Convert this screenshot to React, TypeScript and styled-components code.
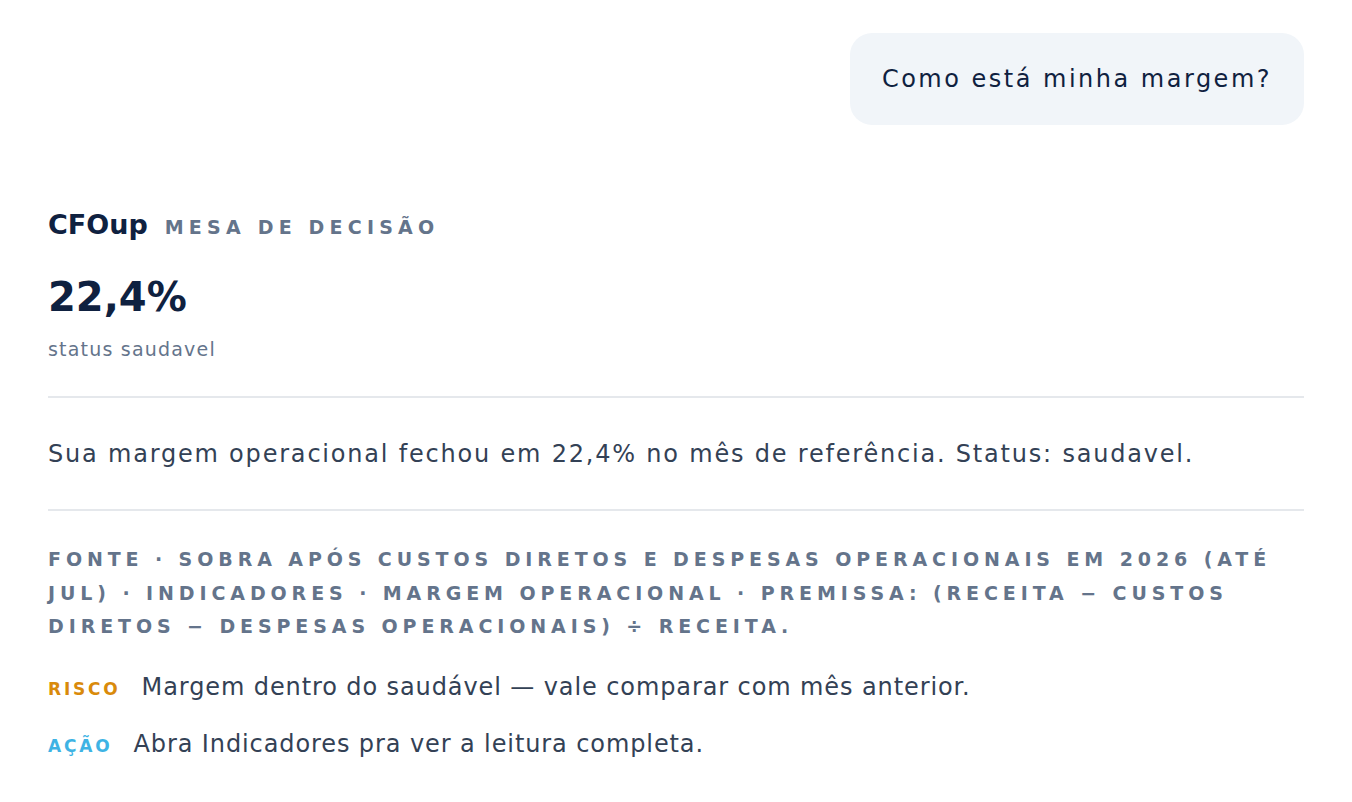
import React from "react";
import styled, { createGlobalStyle } from "styled-components";

const GlobalStyle = createGlobalStyle`
	html, body {
		margin: 0;
		padding: 0;
		background: #ffffff;
	}
	body {
		font-family: "DejaVu Sans", "Noto Sans", sans-serif;
		color: #0f2140;
	}
`;

const fontes = [
	"Sobra após custos diretos e despesas operacionais em 2026 (até jul)",
	"Indicadores",
	"Margem operacional",
];
const premissa = "(Receita − Custos diretos − Despesas operacionais) ÷ Receita.";
const fonteTexto = `Fonte · ${fontes.join(" · ")} · Premissa: ${premissa}`;

export default function App() {
	return (
		<>
			<GlobalStyle />
			<Page>
				<UserRow>
					<Bubble>Como está minha margem?</Bubble>
				</UserRow>
				<Answer>
					<Brand>
						<Logo>CFOup</Logo>
						<Kicker>Mesa de decisão</Kicker>
					</Brand>
					<Metric>22,4%</Metric>
					<MetricLabel>status saudavel</MetricLabel>
					<Divider />
					<Summary>
						Sua margem operacional fechou em 22,4% no mês de referência. Status: saudavel.
					</Summary>
					<Divider />
					<Sources>{fonteTexto}</Sources>
					<Note>
						<Tag tone="#d98a0b">Risco</Tag>
						<NoteText>Margem dentro do saudável — vale comparar com mês anterior.</NoteText>
					</Note>
					<Note>
						<Tag tone="#3eb3e4">Ação</Tag>
						<NoteText>Abra Indicadores pra ver a leitura completa.</NoteText>
					</Note>
				</Answer>
			</Page>
		</>
	);
}

const Page = styled.div({
	padding: "33px 48px 40px 48px",
	display: "flex",
	flexDirection: "column",
});

const UserRow = styled.div({
	display: "flex",
	justifyContent: "flex-end",
});

const Bubble = styled.div({
	background: "#f1f5f9",
	borderRadius: "22px",
	padding: "30px 32px",
	fontSize: "24px",
	lineHeight: "32px",
	letterSpacing: "2.5px",
	color: "#0f2140",
});

const Answer = styled.div({
	marginTop: "84px",
	display: "flex",
	flexDirection: "column",
});

const Brand = styled.div({
	display: "flex",
	alignItems: "baseline",
	gap: "17px",
});

const Logo = styled.span({
	fontSize: "27px",
	fontWeight: 700,
	color: "#0f2140",
});

const Kicker = styled.span({
	fontSize: "19px",
	fontWeight: 600,
	letterSpacing: "5.2px",
	textTransform: "uppercase",
	color: "#64748b",
});

const Metric = styled.div({
	marginTop: "32px",
	fontSize: "40px",
	lineHeight: "50px",
	fontWeight: 800,
	color: "#0f2140",
});

const MetricLabel = styled.div({
	marginTop: "16px",
	fontSize: "19px",
	letterSpacing: "1.2px",
	color: "#64748b",
});

const Divider = styled.hr({
	border: 0,
	borderTop: "2px solid #e5e8ec",
	margin: "36px 0",
	width: "100%",
});

const Summary = styled.p({
	margin: "3px 0 2px 0",
	fontSize: "24px",
	lineHeight: "34px",
	letterSpacing: "1.8px",
	color: "#334155",
});

const Sources = styled.p({
	margin: "-4px 0 0 0",
	fontSize: "19px",
	lineHeight: "33.5px",
	fontWeight: 600,
	letterSpacing: "4.9px",
	textTransform: "uppercase",
	color: "#64748b",
});

const Note = styled.div({
	marginTop: "29px",
	display: "flex",
	alignItems: "baseline",
	gap: "21px",
});

const Tag = styled.span<{ tone: string }>(({ tone }) => ({
	fontSize: "17px",
	fontWeight: 700,
	letterSpacing: "2.8px",
	textTransform: "uppercase",
	color: tone,
}));

const NoteText = styled.span({
	fontSize: "24px",
	letterSpacing: "0.9px",
	color: "#334155",
});
